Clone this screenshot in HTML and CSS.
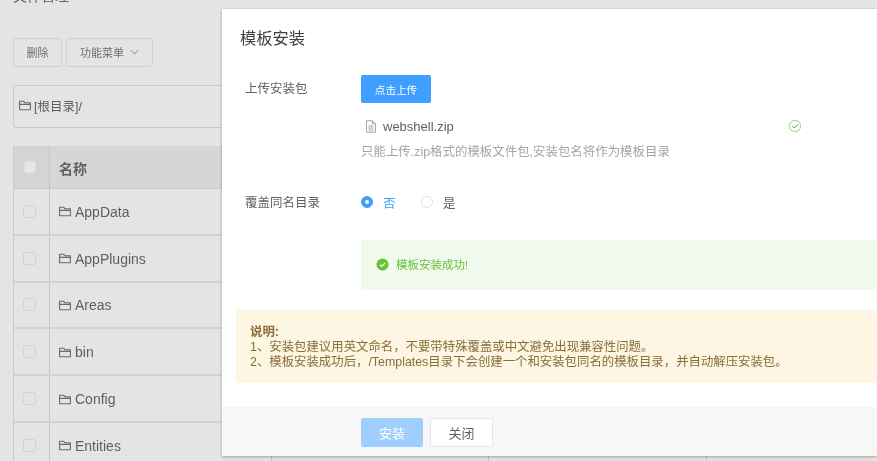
FILE: index.html
```html
<!DOCTYPE html>
<html lang="zh-CN">
<head>
<meta charset="utf-8">
<title>模板安装</title>
<link rel="stylesheet" href="styles.css">
</head>
<body>
<svg class="defs" width="0" height="0" aria-hidden="true">
  <symbol id="folder" viewBox="0 0 12 11">
    <path d="M.6 9.8V1.2h4l1.2 1.5h5.6v7.1zM.6 4.4h10.8" fill="none" stroke="currentColor" stroke-width="1.1" stroke-linejoin="round"/>
  </symbol>
</svg>
<main class="page">
  <h1 class="page-title">文件管理</h1>
  <div class="toolbar">
    <button class="btn btn-del">删除</button>
    <button class="btn btn-menu">功能菜单<svg class="chev" viewBox="0 0 10 6"><path d="M1 1l4 4 4-4" fill="none" stroke="currentColor"/></svg></button>
  </div>
  <div class="crumb"><svg class="ico"><use href="#folder"/></svg>[根目录]/</div>
  <div class="table">
    <div class="row head"><div class="c-check"><span class="box"></span></div><div class="c-name">名称</div></div>
    <div class="row"><div class="c-check"><span class="box"></span></div><div class="c-name"><svg class="ico"><use href="#folder"/></svg>AppData</div><div class="c-a"></div><div class="c-b"></div></div>
    <div class="row"><div class="c-check"><span class="box"></span></div><div class="c-name"><svg class="ico"><use href="#folder"/></svg>AppPlugins</div><div class="c-a"></div><div class="c-b"></div></div>
    <div class="row"><div class="c-check"><span class="box"></span></div><div class="c-name"><svg class="ico"><use href="#folder"/></svg>Areas</div><div class="c-a"></div><div class="c-b"></div></div>
    <div class="row"><div class="c-check"><span class="box"></span></div><div class="c-name"><svg class="ico"><use href="#folder"/></svg>bin</div><div class="c-a"></div><div class="c-b"></div></div>
    <div class="row"><div class="c-check"><span class="box"></span></div><div class="c-name"><svg class="ico"><use href="#folder"/></svg>Config</div><div class="c-a"></div><div class="c-b"></div></div>
    <div class="row"><div class="c-check"><span class="box"></span></div><div class="c-name"><svg class="ico"><use href="#folder"/></svg>Entities</div><div class="c-a"></div><div class="c-b"></div></div>
  </div>
</main>

<section class="dialog">
  <div class="dialog-body">
    <h2 class="dialog-title">模板安装</h2>
    <div class="form-row upload-row">
      <label class="form-label">上传安装包</label>
      <div class="form-value">
        <button class="upload-btn">点击上传</button>
        <div class="file">
          <svg class="file-ico" viewBox="0 0 12 13"><path d="M1.5.8h6l3 3v8.4h-9zM7.5.8v3h3M3.5 6h5M3.5 8h5M3.5 10h5" fill="none" stroke="currentColor"/></svg>
          <span class="file-name">webshell.zip</span>
          <svg class="file-ok" viewBox="0 0 12 12"><rect x=".6" y=".6" width="10.8" height="10.8" rx="4.6" fill="none" stroke="currentColor"/><path d="M3.4 6.1l1.9 1.9 3.4-3.6" fill="none" stroke="#5a9a3a"/></svg>
        </div>
        <p class="tip">只能上传.zip格式的模板文件包,安装包名将作为模板目录</p>
      </div>
    </div>
    <div class="form-row radio-row">
      <label class="form-label">覆盖同名目录</label>
      <div class="radios">
        <span class="radio on"><i></i>否</span>
        <span class="radio"><i></i>是</span>
      </div>
    </div>
    <div class="success">
      <svg class="success-ico" viewBox="0 0 14 14"><circle cx="7" cy="7" r="6.5" fill="#67c23a"/><path d="M4.2 7.2l2 1.9 3.6-3.8" fill="none" stroke="#fff" stroke-width="1.2"/></svg>
      <span>模板安装成功!</span>
    </div>
    <div class="notice">
      <strong>说明:</strong>
      <p>1、安装包建议用英文命名，不要带特殊覆盖或中文避免出现兼容性问题。</p>
      <p>2、模板安装成功后，/Templates目录下会创建一个和安装包同名的模板目录，并自动解压安装包。</p>
    </div>
  </div>
  <footer class="dialog-foot">
    <button class="foot-btn install">安装</button>
    <button class="foot-btn close">关闭</button>
  </footer>
</section>
</body>
</html>
```
FILE: styles.css
```css
* { box-sizing: border-box; }
html, body { margin: 0; height: 100%; }
html { background: #e4e4e4; }
body {
  color: #5f6062;
  font-family: "Liberation Sans", "Noto Sans CJK SC", sans-serif;
  font-size: 14px;
  overflow: hidden;
  position: relative;
  filter: blur(.35px);
}
.defs { position: absolute; }
button { font-family: inherit; cursor: pointer; }
.page { padding: 0 0 0 13px; height: 461px; overflow: hidden; }
.page-title { margin: -14px 0 0; height: 52px; font-size: 14px; line-height: 20px; font-weight: 400; color: #626262; }
.toolbar { display: flex; gap: 4px; height: 47px; }
.btn {
  height: 29px; padding: 0 0 2px; background: #e4e4e4; color: #6f6f70;
  border: 1px solid #cfcfd0; border-radius: 3px; font-size: 11px;
  display: flex; align-items: center; justify-content: center;
}
.btn-del { width: 49px; }
.btn-menu { width: 87px; }
.chev { width: 9px; height: 6px; margin-left: 6px; }
.crumb {
  height: 43px; width: 900px; border: 1px solid #c9c9c9; border-radius: 2px;
  display: flex; align-items: center; padding: 0 0 2px 5px; color: #5d5d5e; font-size: 12.5px;
  margin-bottom: 18px;
}
.crumb .ico { margin-right: 3px; }
.ico { width: 12px; height: 11px; margin-right: 4px; color: #6a6a6b; flex: none; }
.table { width: 900px; border-left: 1px solid #cacaca; }
.row { display: flex; height: 46.8px; border-bottom: 2px solid #d2d2d2; }
.head { height: 43px; background: #d6d6d6; border-bottom: 1px solid #cbcbcb; font-weight: 700; }
.c-check { width: 36px; display: flex; align-items: center; padding-left: 9px; border-right: 1px solid #c6c6c6; flex: none; }
.head .c-check { background: #d4d4d4; padding-left: 10px; }
.box { width: 13px; height: 13px; border: 1px solid #d3d3d3; border-radius: 2px; background: #e4e4e4; }
.head .box { width: 12px; height: 12px; background: #e6e6e6; border-color: #dfdfdf; }
.c-name { width: 221px; padding: 1px 0 0 9px; display: flex; align-items: center; font-size: 14px; flex: none; }
.c-a { width: 218px; border-left: 1px solid #c6c6c6; border-right: 1px solid #c6c6c6; flex: none; }
.c-b { width: 218px; border-right: 1px solid #c6c6c6; flex: none; }

.dialog {
  position: absolute; left: 222px; top: 9px; width: 655px; height: 447px;
  background: #fff; box-shadow: 0 1px 3px rgba(0,0,0,.3);
  display: flex; flex-direction: column;
}
.dialog-body { flex: 1; padding: 18px 1px 0 14px; display: flex; flex-direction: column; }
.dialog-title { margin: 0 0 0 4px; font-size: 16.25px; line-height: 22px; font-weight: 400; color: #3f3f40; }
.form-row { display: flex; }
.form-label { width: 116px; padding-left: 9px; font-size: 12.5px; color: #606266; flex: none; }
.upload-row { margin-top: 26px; height: 97px; }
.upload-row .form-label { padding-top: 4px; line-height: 20px; }
.form-value { flex: 1; margin-left: 9px; }
.upload-btn {
  display: block; width: 70px; height: 28px; padding: 0; background: #409eff; color: #fff;
  border: 0; border-radius: 2px; font-size: 10.6px;
}
.file { display: flex; align-items: center; height: 20px; margin-top: 13px; padding-left: 4px; }
.file-ico { width: 12px; height: 13px; color: #a2a3a5; flex: none; }
.file-name { margin-left: 6px; font-size: 13px; color: #5f6062; flex: 1; }
.file-ok { width: 12px; height: 12px; color: #8bd770; margin-right: 75px; flex: none; }
.tip { margin: 7px 0 0; font-size: 12.45px; line-height: 18px; color: #a4a5a7; }
.radio-row { margin-top: 15px; height: 30px; align-items: center; }
.radio-row .form-label { line-height: 20px; padding-top: 2px; }
.radios { display: flex; margin-left: 9px; font-size: 12.5px; color: #606266; }
.radio { display: flex; align-items: center; width: 60px; }
.radio i { width: 12px; height: 12px; margin-right: 10px; border: 1px solid #e0e2e6; border-radius: 50%; background: #fff; }
.radio.on { color: #409eff; }
.radio.on i { background: #409eff; border-color: #409eff; position: relative; }
.radio.on i::after { content: ""; position: absolute; left: 3px; top: 3px; width: 4px; height: 4px; border-radius: 50%; background: #fff; }
.success {
  margin: 23px 0 0 125px; height: 50px; background: #f0f9eb; border-radius: 3px;
  display: flex; align-items: center; padding: 0 0 2px 15px; color: #67c23a; font-size: 11.5px;
}
.success-ico { width: 13px; height: 13px; margin-right: 7px; }
.notice {
  margin-top: 20px; height: 73px; padding: 15px 14px 0; background: #fdf6e3; border-radius: 3px;
  color: #8a6d3b; font-size: 12.4px; line-height: 15px;
}
.notice strong { display: block; }
.notice p { margin: 0; }
.dialog-foot {
  height: 49px; background: #f7f7f7; display: flex; gap: 7px; padding: 11px 0 0 139px; flex: none;
}
.foot-btn { width: 62px; height: 29px; padding: 0; border-radius: 2px; font-size: 13px; }
.install { background: #a0cfff; border: 1px solid #a0cfff; color: #fff; }
.close { width: 63px; background: #fff; border: 1px solid #e4e6ea; color: #606266; }
```
